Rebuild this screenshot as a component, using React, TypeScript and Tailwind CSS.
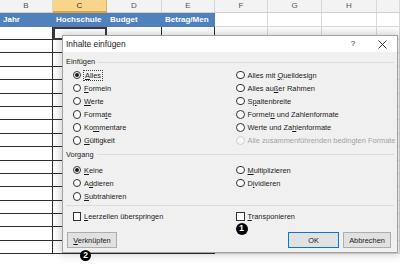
import React from "react";

const font = "font-['Liberation_Sans',Arial,sans-serif]";

type LabelProps = { pre?: string; k: string; post?: string };

const Key = ({ pre = "", k, post = "" }: LabelProps) => (
  <span className="whitespace-nowrap">
    {pre}
    <span className="underline underline-offset-[1px]">{k}</span>
    {post}
  </span>
);

const Radio = ({ checked = false, disabled = false }: { checked?: boolean; disabled?: boolean }) => (
  <span
    className={
      disabled
        ? "w-[8.5px] h-[8.5px] shrink-0 rounded-full border border-[#cfcfcf] bg-[#f7f7f7]"
        : "w-[8.5px] h-[8.5px] shrink-0 rounded-full border border-[#333] bg-white flex items-center justify-center"
    }
  >
    {checked && <span className="w-[4px] h-[4px] rounded-full bg-[#1b1b1b]" />}
  </span>
);

const Check = () => (
  <span className="w-[8.5px] h-[8.5px] shrink-0 border border-[#333] bg-white" />
);

const Option = ({
  children,
  checked,
  disabled,
  focus,
}: {
  children: React.ReactNode;
  checked?: boolean;
  disabled?: boolean;
  focus?: boolean;
}) => (
  <div className="h-[13.1px] flex items-center gap-[3px] whitespace-nowrap">
    <Radio checked={checked} disabled={disabled} />
    <span
      className={
        focus
          ? "leading-[9px] px-[1px] outline outline-1 outline-dotted outline-[#444]"
          : disabled
            ? "leading-[9px] text-[#a3a3a3]"
            : "leading-[9px]"
      }
    >
      {children}
    </span>
  </div>
);

const GroupLabel = ({ text }: { text: string }) => (
  <div className="h-[10px] flex items-center">
    <span className="text-[#1e1e1e]">{text}</span>
    <div className="flex-1 h-px bg-[#dcdcdc] ml-[3px]" />
  </div>
);

const Sheet = () => {
  const letters = ["B", "C", "D", "E", "F", "G", "H", ""];
  const heads = ["Jahr", "Hochschule", "Budget", "Betrag/Men"];
  const rows = Array.from({ length: 16 }, (_, i) => i);

  return (
    <div className="grid grid-cols-[53px_54px_55px_53px_53px_54px_55px_1fr]">
      {letters.map((l) =>
        l === "C" ? (
          <div
            key={l}
            className="h-[13px] flex items-center justify-center text-[8px] text-[#333] bg-[#f9d58c] border-b-2 border-b-[#e3a33b] border-r border-r-[#d9b06a]"
          >
            {l}
          </div>
        ) : (
          <div
            key={l}
            className="h-[13px] flex items-center justify-center text-[8px] text-[#555] bg-[#f3f3f3] border-b border-b-[#cfcfcf] border-r border-r-[#d7d7d7]"
          >
            {l}
          </div>
        )
      )}

      {letters.map((l, i) =>
        i < 4 ? (
          <div
            key={"h" + l}
            className="h-[14px] flex items-center pl-[3px] bg-[#4f81bd] text-white font-bold text-[8px] whitespace-nowrap overflow-hidden"
          >
            {heads[i]}
          </div>
        ) : (
          <div key={"h" + l} className="h-[14px] border-r border-b border-[#dadada] bg-white" />
        )
      )}

      {letters.map((l, i) =>
        i === 1 ? (
          <div key={"s" + l} className="h-[13px] border-2 border-[#3b3b3b] bg-white" />
        ) : i < 4 ? (
          <div key={"s" + l} className="h-[13px] border-r border-b border-[#2e2e2e] bg-white" />
        ) : (
          <div key={"s" + l} className="h-[13px] border-r border-b border-[#dadada] bg-white" />
        )
      )}

      {rows.map((r) =>
        letters.map((l, i) =>
          i < 4 ? (
            <div key={r + l} className="h-[13.4px] border-r border-b border-[#2e2e2e] bg-white" />
          ) : (
            <div key={r + l} className="h-[13.4px] border-r border-b border-[#dadada] bg-white" />
          )
        )
      )}
    </div>
  );
};

const Dialog = () => (
  <div className="absolute left-[62px] top-[35px] w-[336px] h-[218px] border border-[#a3a3a3] bg-[#f0f0f0] shadow-[0_0_8px_2px_rgba(0,0,0,0.18)] flex flex-col text-[7.4px] text-[#1b1b1b]">
    <div className="h-[16px] bg-white flex items-center pl-[3px] text-[8.4px]">
      <span className="flex-1">Inhalte einfügen</span>
      <span className="w-[10px] text-center mr-[20px] text-[8px]">?</span>
      <svg width="9" height="9" viewBox="0 0 9 9" className="mr-[10px]">
        <path d="M0.5 0.5 L8.5 8.5 M8.5 0.5 L0.5 8.5" stroke="#222" strokeWidth="0.9" fill="none" />
      </svg>
    </div>

    <div className="flex-1 flex flex-col px-[3px] pt-[5px]">
      <GroupLabel text="Einfügen" />
      <div className="grid grid-cols-[170px_1fr] mt-[1.5px]">
        <div className="pl-[6.5px] flex flex-col">
          <Option checked focus>
            <Key k="A" post="lles" />
          </Option>
          <Option>
            <Key k="F" post="ormeln" />
          </Option>
          <Option>
            <Key k="W" post="erte" />
          </Option>
          <Option>
            <Key pre="Forma" k="t" post="e" />
          </Option>
          <Option>
            <Key pre="Ko" k="m" post="mentare" />
          </Option>
          <Option>
            <Key k="G" post="ültigkeit" />
          </Option>
        </div>
        <div className="flex flex-col">
          <Option>
            <Key pre="Alles mit " k="Q" post="uelldesign" />
          </Option>
          <Option>
            <Key pre="Alles au" k="ß" post="er Rahmen" />
          </Option>
          <Option>
            <Key pre="S" k="p" post="altenbreite" />
          </Option>
          <Option>
            <Key pre="Formel" k="n" post=" und Zahlenformate" />
          </Option>
          <Option>
            <Key pre="Werte und Za" k="h" post="lenformate" />
          </Option>
          <Option disabled>Alle zusammenführenden bedingten Formate</Option>
        </div>
      </div>

      <div className="mt-[2px]">
        <GroupLabel text="Vorgang" />
      </div>
      <div className="grid grid-cols-[170px_1fr] mt-[4.5px]">
        <div className="pl-[6.5px] flex flex-col">
          <Option checked>
            <Key k="K" post="eine" />
          </Option>
          <Option>
            <Key pre="A" k="d" post="dieren" />
          </Option>
          <Option>
            <Key k="S" post="ubtrahieren" />
          </Option>
        </div>
        <div className="flex flex-col">
          <Option>
            <Key k="M" post="ultiplizieren" />
          </Option>
          <Option>
            <Key pre="D" k="i" post="vidieren" />
          </Option>
        </div>
      </div>

      <div className="h-px bg-[#dcdcdc] mt-[2.5px]" />

      <div className="grid grid-cols-[170px_1fr] mt-[3.5px]">
        <div className="pl-[6.5px] h-[13px] flex items-center gap-[3px]">
          <Check />
          <Key k="L" post="eerzellen überspringen" />
        </div>
        <div className="h-[13px] flex items-center gap-[3px]">
          <Check />
          <Key k="T" post="ransponieren" />
        </div>
      </div>

      <div className="flex items-center justify-between mt-[9.5px] pl-[1px] pr-[3px]">
        <button className="w-[50px] h-[16px] bg-[#e1e1e1] border border-[#adadad] flex items-center justify-center">
          <Key k="V" post="erknüpfen" />
        </button>
        <div className="flex gap-[4px]">
          <button className="w-[51px] h-[16px] bg-[#e1e1e1] border border-[#0078d7] flex items-center justify-center">
            OK
          </button>
          <button className="w-[48px] h-[16px] bg-[#e1e1e1] border border-[#adadad] flex items-center justify-center">
            Abbrechen
          </button>
        </div>
      </div>
    </div>
  </div>
);

const Badge = ({ n, className }: { n: string; className: string }) => (
  <div
    className={
      "absolute rounded-full bg-black text-white font-bold flex items-center justify-center " + className
    }
  >
    {n}
  </div>
);

export default function App() {
  return (
    <div className={`relative w-[400px] h-[264px] overflow-hidden bg-white ${font}`}>
      <Sheet />
      <Dialog />
      <Badge n="1" className="left-[235.5px] top-[222.5px] w-[12px] h-[12px] text-[9px]" />
      <Badge n="2" className="left-[80px] top-[249.5px] w-[11px] h-[11px] text-[8.5px]" />
    </div>
  );
}
